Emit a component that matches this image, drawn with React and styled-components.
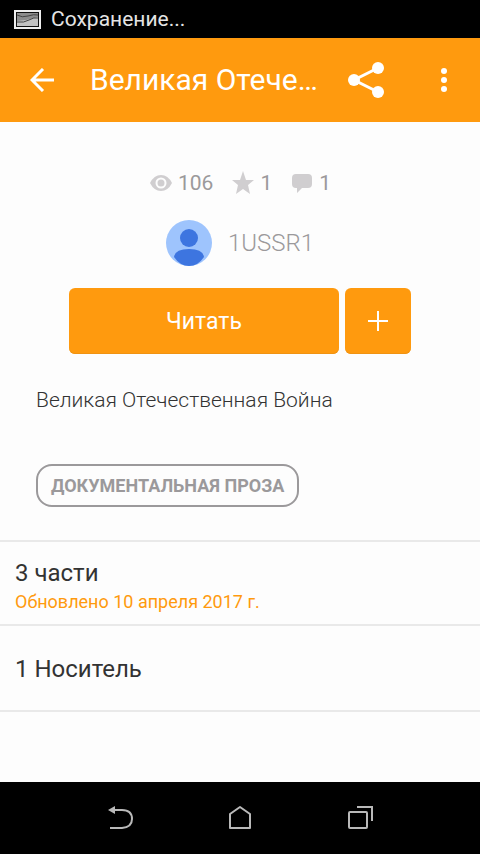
import React from "react";
import styled, { createGlobalStyle } from "styled-components";

const ORANGE = "#ff9a0e";

const GlobalStyle = createGlobalStyle`
  * { box-sizing: border-box; }
  body {
    margin: 0;
    background: #fdfdfd;
    font-family: Roboto, "Noto Sans", sans-serif;
  }
  h1, h2, p { margin: 0; font-weight: 400; }
  button { border: 0; padding: 0; background: none; font-family: inherit; cursor: pointer; }
  svg { display: block; flex: none; }
`;

const Screen = styled.div`
  display: flex;
  flex-direction: column;
  min-height: 100vh;
`;

const StatusBar = styled.div`
  display: flex;
  align-items: center;
  gap: 10px;
  height: 38px;
  padding: 0 14px;
  background: #000;
  color: #e4e4e4;
  font-size: 21px;
  line-height: 38px;
`;

const AppBar = styled.header`
  display: flex;
  align-items: center;
  height: 84px;
  background: ${ORANGE};
  color: #fff;
`;

const IconButton = styled.button`
  display: flex;
  align-items: center;
  justify-content: center;
  flex: none;
  width: ${({ $width }) => $width}px;
  height: 84px;
  color: inherit;
`;

const Title = styled.h1`
  flex: 1;
  min-width: 0;
  padding-left: 6px;
  overflow: hidden;
  white-space: nowrap;
  text-overflow: ellipsis;
  font-size: 30px;
  line-height: 40px;
`;

const Content = styled.main`
  flex: 1;
`;

const Stats = styled.div`
  display: flex;
  justify-content: center;
  gap: 18px;
  padding-top: 46px;
`;

const Stat = styled.span`
  display: flex;
  align-items: center;
  gap: 5px;
  color: #9b999b;
  font-size: 21px;
  line-height: 30px;
`;

const Author = styled.a`
  display: flex;
  align-items: center;
  justify-content: center;
  gap: 16px;
  margin-top: 22px;
  color: #9b999b;
  font-size: 24px;
  font-weight: 300;
  line-height: 46px;
  text-decoration: none;
`;

const Actions = styled.div`
  display: flex;
  gap: 6px;
  margin: 22px 69px 0;
`;

const ActionButton = styled.button`
  display: flex;
  align-items: center;
  justify-content: center;
  flex: ${({ $square }) => ($square ? "0 0 66px" : "1")};
  height: 66px;
  padding-top: ${({ $square }) => ($square ? 0 : 2)}px;
  border-radius: 6px;
  background: ${ORANGE};
  box-shadow: inset 0 -1px 0 #f09312;
  color: #fff;
  font-size: 23px;
  line-height: 32px;
`;

const Description = styled.p`
  padding: 0 36px;
  margin-top: 30px;
  color: #333;
  font-size: 21px;
  font-weight: 300;
  line-height: 32px;
`;

const Tags = styled.div`
  display: flex;
  padding: 48px 36px 33px;
`;

const Tag = styled.a`
  padding: 0 13px;
  border: 2px solid #9b999b;
  border-radius: 16px;
  color: #9b999b;
  font-size: 18px;
  font-weight: 700;
  line-height: 39px;
  text-decoration: none;
  text-transform: uppercase;
`;

const Row = styled.section`
  height: ${({ $height }) => $height}px;
  padding: ${({ $top }) => $top}px 15px 0;
  border-top: 2px solid #e9e9e9;
`;

const RowList = styled.div`
  border-bottom: 2px solid #e9e9e9;
`;

const RowTitle = styled.h2`
  color: #333;
  font-size: 24px;
  line-height: 30px;
`;

const RowNote = styled.p`
  color: ${ORANGE};
  font-size: 18px;
  line-height: 28px;
`;

const NavBar = styled.nav`
  display: flex;
  justify-content: center;
  height: 72px;
  background: #000;
  color: #b9b9b9;
`;

const NavButton = styled.button`
  display: flex;
  align-items: center;
  justify-content: center;
  width: 25%;
  color: inherit;
`;

const PictureIcon = () => (
  <svg width="27" height="19" viewBox="0 0 27 19">
    <rect x="1" y="1" width="25" height="17" fill="#111" stroke="#eee" strokeWidth="2" />
    <rect x="3" y="3" width="21" height="13" fill="#8c8c8c" />
    <path d="M3 11 L12 10 L24 7 V16 H3Z" fill="#c2c2c2" />
    <path d="M3 5 Q8 8 14 6 T24 5 M3 12 Q10 13 15 10 T24 8" fill="none" stroke="#444" />
  </svg>
);

const BackIcon = () => (
  <svg width="24" height="24" viewBox="0 0 24 24" fill="none" stroke="currentColor" strokeWidth="3">
    <path d="M24 12H3M13 1L2 12L13 23" />
  </svg>
);

const ShareIcon = () => (
  <svg width="36" height="36" viewBox="0 0 36 36" fill="currentColor">
    <path d="M30 6L6 18L30 30" fill="none" stroke="currentColor" strokeWidth="3" />
    <circle cx="30" cy="6" r="6" />
    <circle cx="6" cy="18" r="6" />
    <circle cx="30" cy="30" r="6" />
  </svg>
);

const MoreIcon = () => (
  <svg width="6" height="24" viewBox="0 0 6 24" fill="currentColor">
    <circle cx="3" cy="3" r="3" />
    <circle cx="3" cy="12" r="3" />
    <circle cx="3" cy="21" r="3" />
  </svg>
);

const EyeIcon = () => (
  <svg width="24" height="24" viewBox="0 0 24 24">
    <path d="M1 12Q5 4 12 4T23 12Q19 20 12 20T1 12Z" fill="#d0ced0" />
    <circle cx="12" cy="12" r="4.5" fill="none" stroke="#fdfdfd" strokeWidth="2" />
  </svg>
);

const StarIcon = () => (
  <svg width="24" height="24" viewBox="0 0 24 24" fill="#d0ced0">
    <path d="M12 0L15 9H23L17 14L19 23L12 18L5 23L7 14L1 9H9Z" />
  </svg>
);

const CommentIcon = () => (
  <svg width="24" height="24" viewBox="0 0 24 24" fill="#d0ced0">
    <path d="M6 3H18Q22 3 22 7V13Q22 17 18 17H12L7 22V17H6Q2 17 2 13V7Q2 3 6 3Z" />
  </svg>
);

const Avatar = () => (
  <svg width="46" height="46" viewBox="0 0 46 46">
    <circle cx="23" cy="23" r="23" fill="#9ec4fd" />
    <circle cx="23" cy="18" r="9" fill="#3d75e0" />
    <path d="M8 37Q9 29 23 29T38 37Q32 46 23 46T8 37Z" fill="#3d75e0" />
  </svg>
);

const PlusIcon = () => (
  <svg width="20" height="20" viewBox="0 0 20 20" stroke="currentColor" strokeWidth="2">
    <path d="M10 0V20M0 10H20" />
  </svg>
);

const NavIcon = ({ children }) => (
  <svg width="26" height="26" viewBox="0 0 26 26" fill="none" stroke="currentColor" strokeWidth="2">
    {children}
  </svg>
);

export default function App() {
  return (
    <Screen>
      <GlobalStyle />
      <StatusBar>
        <PictureIcon />
        <span>Сохранение...</span>
      </StatusBar>
      <AppBar>
        <IconButton $width={84} aria-label="Назад"><BackIcon /></IconButton>
        <Title>Великая Отече…</Title>
        <IconButton $width={84} aria-label="Поделиться"><ShareIcon /></IconButton>
        <IconButton $width={72} aria-label="Ещё"><MoreIcon /></IconButton>
      </AppBar>
      <Content>
        <Stats>
          <Stat><EyeIcon />106</Stat>
          <Stat><StarIcon />1</Stat>
          <Stat><CommentIcon />1</Stat>
        </Stats>
        <Author href="#author"><Avatar />1USSR1</Author>
        <Actions>
          <ActionButton>Читать</ActionButton>
          <ActionButton $square aria-label="Добавить"><PlusIcon /></ActionButton>
        </Actions>
        <Description>Великая Отечественная Война</Description>
        <Tags><Tag href="#tag">Документальная проза</Tag></Tags>
        <RowList>
          <Row $height={84} $top={16}>
            <RowTitle>3 части</RowTitle>
            <RowNote>Обновлено 10 апреля 2017 г.</RowNote>
          </Row>
          <Row $height={86} $top={28}>
            <RowTitle>1 Носитель</RowTitle>
          </Row>
        </RowList>
      </Content>
      <NavBar>
        <NavButton aria-label="Назад">
          <NavIcon>
            <path d="M3 23H15Q25 22 25 14Q25 5 15 5H6" />
            <path d="M1 5L8 1V9Z" fill="currentColor" stroke="none" />
          </NavIcon>
        </NavButton>
        <NavButton aria-label="Домой">
          <NavIcon><path d="M3 9L13 2L23 9V23H3Z" strokeLinejoin="round" /></NavIcon>
        </NavButton>
        <NavButton aria-label="Недавние">
          <NavIcon>
            <rect x="2" y="7" width="18" height="16" rx="1" />
            <path d="M10 2H25V16" />
          </NavIcon>
        </NavButton>
      </NavBar>
    </Screen>
  );
}
